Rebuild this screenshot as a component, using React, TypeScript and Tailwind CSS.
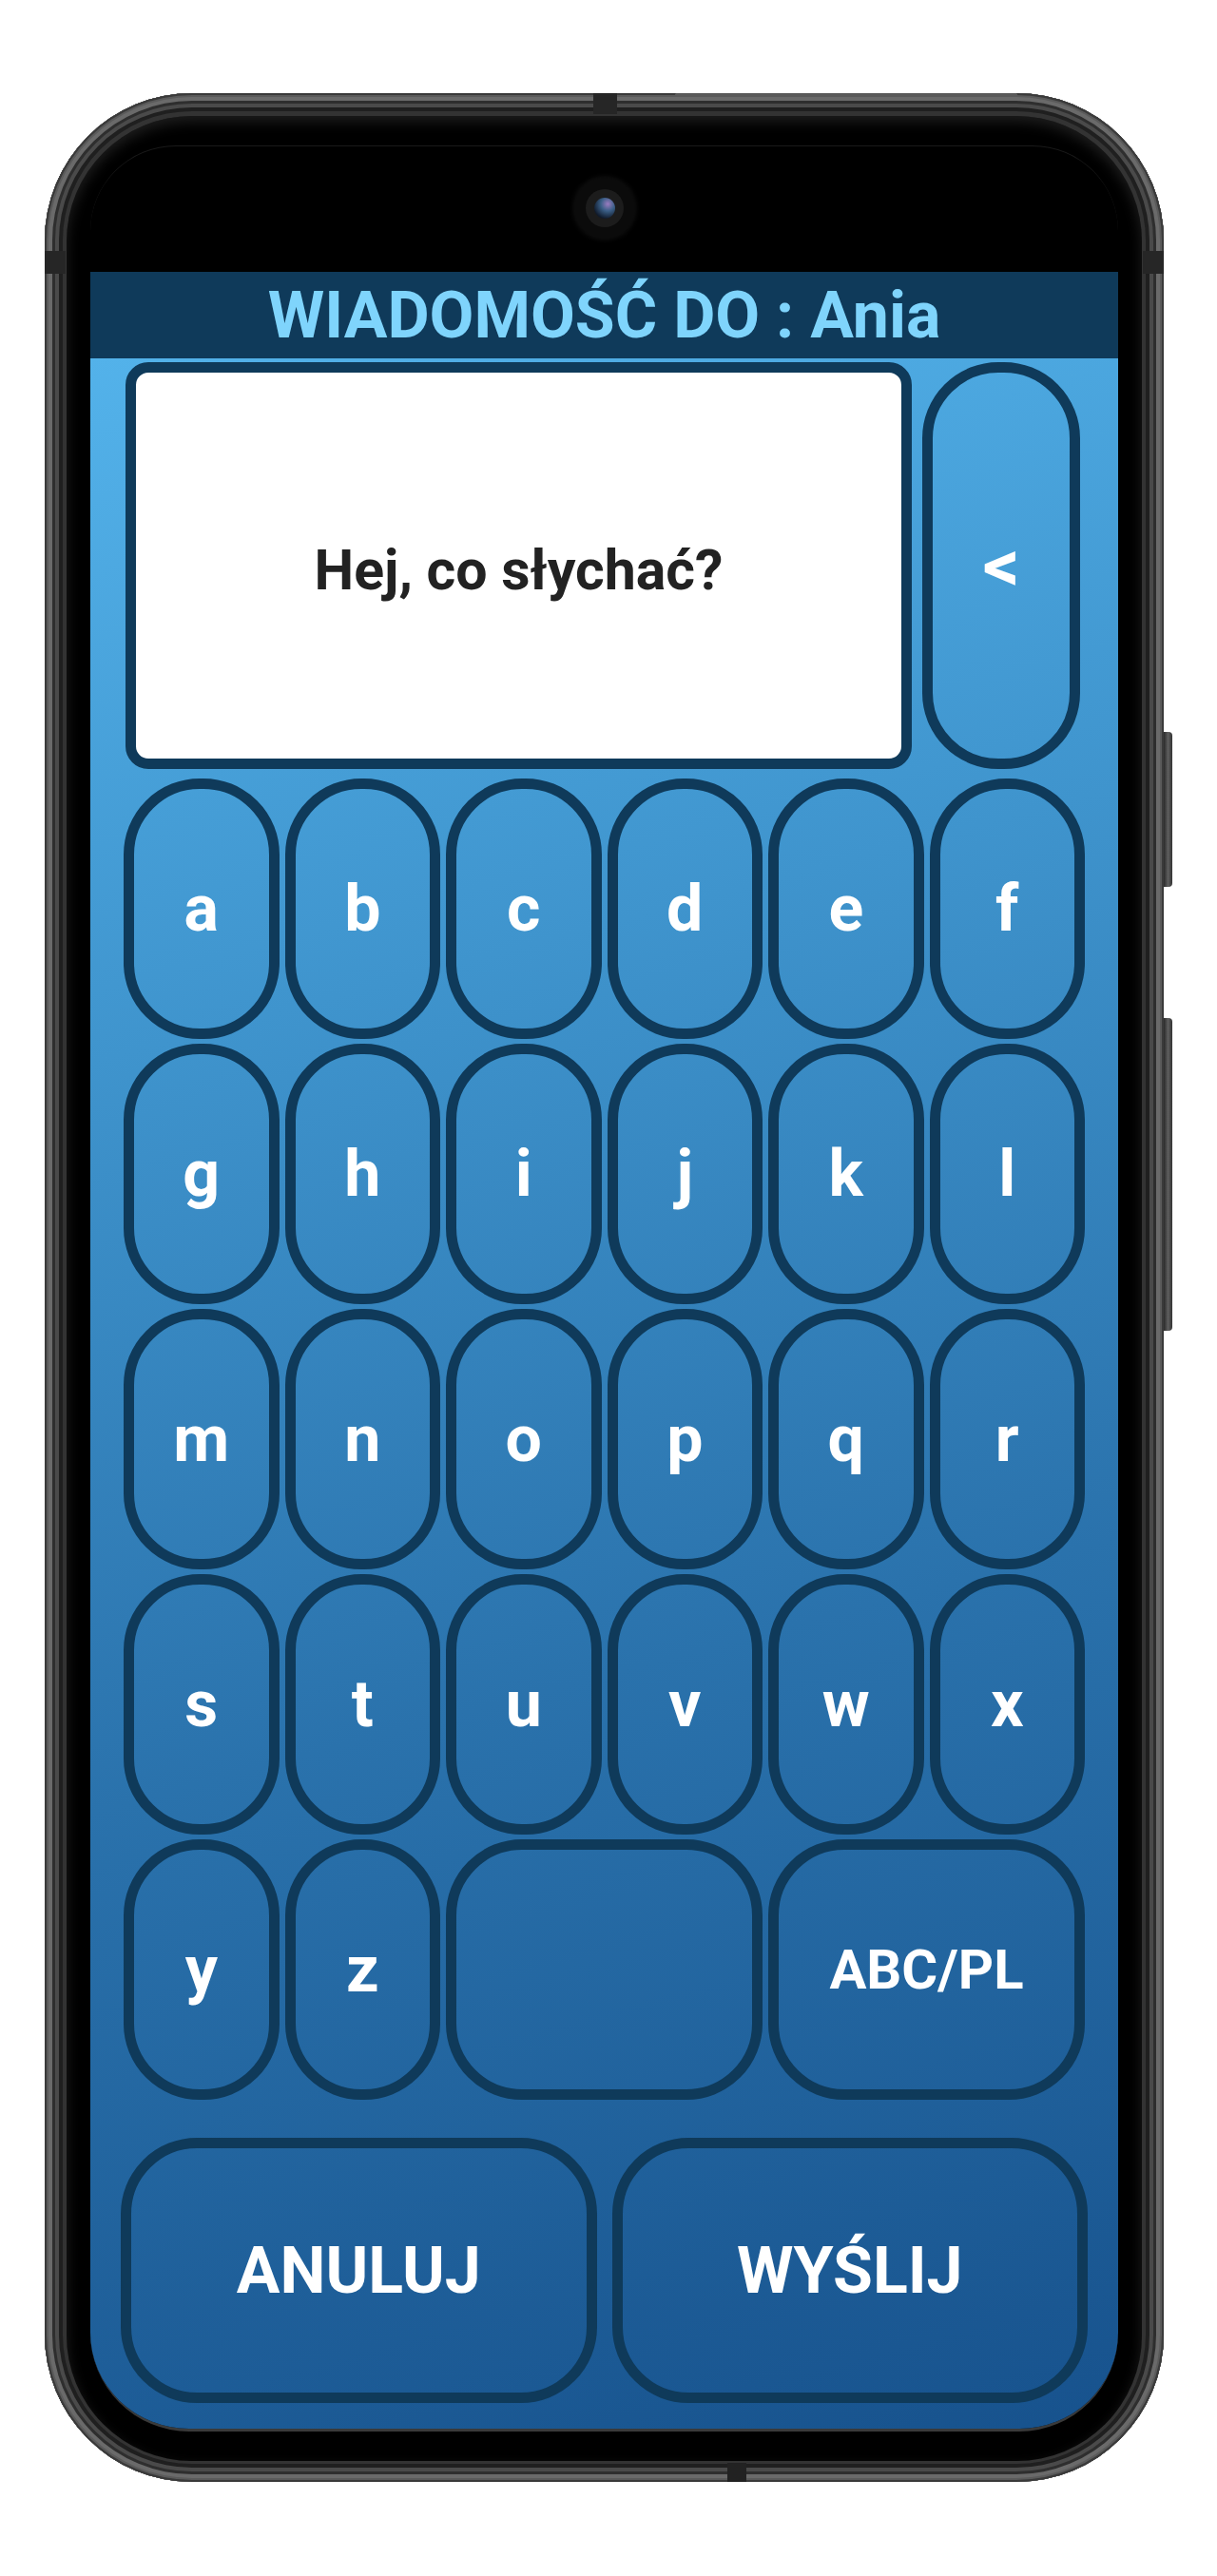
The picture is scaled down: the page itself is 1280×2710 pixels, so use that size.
import type { ReactNode } from 'react';

const ROWS = [
  ['a', 'b', 'c', 'd', 'e', 'f'],
  ['g', 'h', 'i', 'j', 'k', 'l'],
  ['m', 'n', 'o', 'p', 'q', 'r'],
  ['s', 't', 'u', 'v', 'w', 'x'],
];

function Key({ children, className = '' }: { children?: ReactNode; className?: string }) {
  return (
    <div
      className={`flex items-center justify-center rounded-[80px] border-[11px] border-[#0f3a5a] text-white font-bold leading-none ${className}`}
    >
      {children}
    </div>
  );
}

// ─── Phone hardware ─────────────────────────────────────────────────────────────

function Camera() {
  return (
    <div className="w-[64px] h-[64px] rounded-full bg-[#0b0b0b] flex items-center justify-center shadow-[0_0_6px_rgba(40,40,40,0.6)]">
      <div className="w-[40px] h-[40px] rounded-full bg-[#1c1c1c] flex items-center justify-center">
        <div className="w-[22px] h-[22px] rounded-full bg-[radial-gradient(circle_at_65%_30%,#9a7cc0_0%,#3a5e86_35%,#101a2a_75%)]" />
      </div>
    </div>
  );
}

function PhoneFrame({ children }: { children: ReactNode }) {
  return (
    <div className="relative w-[1177px] h-[2513px] ml-[47px] mt-[97px] rounded-[155px] bg-[#333] pt-[24px] pb-[22px] px-[23px] shadow-[inset_0_0_0_2px_#3a3a3a,inset_0_0_0_4px_#5a5a5a,inset_0_0_0_8px_#6a6a6a,inset_0_0_0_11px_#2e2e2e,inset_0_0_0_15px_#4a4a4a,inset_0_0_0_19px_#1f1f1f]">
      {/* antenna lines + side keys */}
      <div className="absolute top-0 left-[577px] w-[25px] h-[22px] bg-[#262626]" />
      <div className="absolute top-0 left-[663px] w-[360px] h-[3px] bg-[#5a5a5a] rounded-full" />
      <div className="absolute left-0 top-[166px] w-[22px] h-[24px] bg-[#262626]" />
      <div className="absolute right-0 top-[166px] w-[22px] h-[24px] bg-[#262626]" />
      <div className="absolute bottom-0 left-[718px] w-[20px] h-[20px] bg-[#222]" />
      <div className="absolute -right-[9px] top-[672px] w-[9px] h-[163px] rounded-r-[4px] bg-[linear-gradient(90deg,#2a2a2a,#5e5e5e_50%,#333)]" />
      <div className="absolute -right-[9px] top-[973px] w-[9px] h-[329px] rounded-r-[4px] bg-[linear-gradient(90deg,#2a2a2a,#5e5e5e_50%,#333)]" />

      <div className="w-full h-full rounded-[132px] bg-black pt-[31px] pb-[31px] px-[25px] shadow-[inset_0_6px_14px_rgba(60,60,60,0.5)]">
        <div className="w-full h-full rounded-t-[90px] rounded-b-[104px] overflow-hidden bg-black flex flex-col border-t border-[#1a1a1a] border-b-[3px] border-b-[#3a3a3a]">
          {children}
        </div>
      </div>
    </div>
  );
}

// ─── Screen ─────────────────────────────────────────────────────────────────────

function MessageScreen() {
  return (
    <>
      <div className="h-[132px] shrink-0 flex justify-center pt-[33px]">
        <Camera />
      </div>

      <div className="h-[91px] shrink-0 bg-[#0f3a5a] flex items-center justify-center">
        <span className="text-[68px] font-bold leading-none text-[#7fd4fc]">WIADOMOŚĆ DO : Ania</span>
      </div>

      <div className="flex-1 bg-[linear-gradient(165deg,#53b2ea_0%,#3f94cd_30%,#2a72ac_62%,#17528d_100%)] px-[35px] pt-[4px] flex flex-col">
        {/* message + backspace */}
        <div className="flex gap-[11px] pl-[2px] pr-[5px] h-[428px]">
          <div className="flex-1 rounded-[24px] border-[11px] border-[#0f3a5a] bg-white flex items-center justify-center">
            <span className="text-[59px] font-bold text-[#222] leading-none pt-[8px]">Hej, co słychać?</span>
          </div>
          <Key className="w-[166px] text-[76px]">&lt;</Key>
        </div>

        {/* letters */}
        <div className="grid grid-cols-6 gap-x-[6px] gap-y-[5px] mt-[10px] auto-rows-[274px]">
          {ROWS.flat().map(l => (
            <Key key={l} className="text-[68px]">{l}</Key>
          ))}
          <Key className="text-[68px]">y</Key>
          <Key className="text-[68px]">z</Key>
          <Key className="col-span-2" />
          <Key className="col-span-2 text-[58px]">ABC/PL</Key>
        </div>

        {/* actions */}
        <div className="grid grid-cols-2 gap-[16px] mx-[-3px] mt-[40px] h-[279px]">
          <Key className="text-[68px]">ANULUJ</Key>
          <Key className="text-[68px]">WYŚLIJ</Key>
        </div>
      </div>
    </>
  );
}

export default function App() {
  return (
    <div className="w-[1280px] h-[2710px] bg-white overflow-hidden font-['Roboto','Liberation_Sans',sans-serif] pt-px">
      <PhoneFrame>
        <MessageScreen />
      </PhoneFrame>
    </div>
  );
}
